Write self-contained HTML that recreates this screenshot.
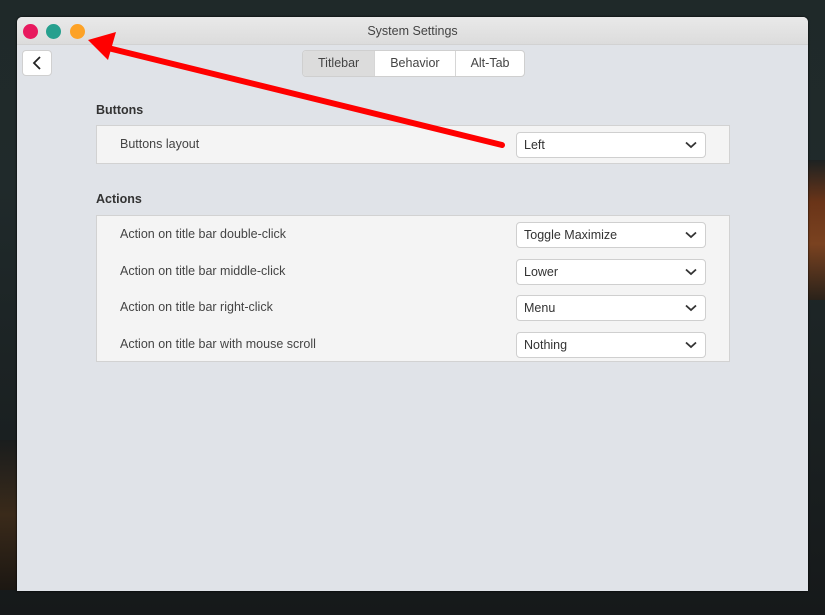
<!DOCTYPE html>
<html><head><style>
*{box-sizing:border-box;margin:0;padding:0}
body{width:825px;height:615px;overflow:hidden;position:relative;font-family:"Liberation Sans","DejaVu Sans",sans-serif;font-size:12.5px;color:#333;
background:linear-gradient(180deg,#1f2929 0%,#202a2b 30%,#16191a 100%);}
.bgr{position:absolute;left:808px;top:160px;width:17px;height:140px;background:linear-gradient(180deg,#1d2222,#6a3418 30%,#7a4220 60%,#2a221a 100%)}
.bgl{position:absolute;left:0;top:440px;width:17px;height:150px;background:linear-gradient(180deg,#1a1d1d,#3a2a1a 50%,#1c1712)}
.win{position:absolute;left:17px;top:17px;width:791px;height:574px;background:#e0e3e8;border-radius:5px 5px 0 0;overflow:hidden;box-shadow:0 0 2px #000}
.tb{height:28px;background:linear-gradient(#e9e9e9,#dcdcdc);text-align:center;line-height:28px;color:#444;font-size:12.5px;border-bottom:1px solid #d2d2d2}
.dot{position:absolute;top:7px;width:15px;height:15px;border-radius:50%}
.back{position:absolute;left:5px;top:33px;width:30px;height:26px;background:#fff;border:1px solid #d0d0d0;border-radius:4px}
.tabs{position:absolute;left:285px;top:33px;height:27px;display:flex;border:1px solid #cfcfcf;border-radius:4px;overflow:hidden;background:#fff}
.tabs div{padding:0 15px;line-height:25px;border-left:1px solid #d6d6d6;color:#444}
.tabs div:first-child{background:#dcdcdc;border-left:none}
h3{position:absolute;left:79px;font-size:12.5px;font-weight:bold;color:#333}
.box{position:absolute;left:79px;width:634px;background:#f4f4f4;border:1px solid #d2d2d2}
.row{height:36.5px;position:relative}
.row span{position:absolute;left:23px;top:11px;color:#444}
.sel{position:absolute;left:419px;top:6px;width:190px;height:26px;background:#fff;border:1px solid #cfcfcf;border-radius:4px;padding-left:7px;line-height:24px;color:#333}
.sel svg{position:absolute;right:8px;top:8px}
</style></head><body>
<div class="bgr"></div><div class="bgl"></div>
<div class="win">
<div class="tb">System Settings</div>
<div class="dot" style="left:6px;background:#e8195e"></div>
<div class="dot" style="left:29px;background:#26a08e"></div>
<div class="dot" style="left:53px;background:#fda226"></div>
<div class="back"><svg width="28" height="24"><path d="M17 6 L11 12 L17 18" fill="none" stroke="#222" stroke-width="1.8"/></svg></div>
<div class="tabs"><div>Titlebar</div><div>Behavior</div><div>Alt-Tab</div></div>
<h3 style="top:86px">Buttons</h3>
<div class="box" style="top:108px;height:39px"><div class="row"><span>Buttons layout</span><div class="sel">Left<svg width="12" height="8"><path d="M1 1.5 L6 6 L11 1.5" fill="none" stroke="#333" stroke-width="1.8"/></svg></div></div></div>
<h3 style="top:175px">Actions</h3>
<div class="box" style="top:198px;height:147px">
<div class="row"><span>Action on title bar double-click</span><div class="sel">Toggle Maximize<svg width="12" height="8"><path d="M1 1.5 L6 6 L11 1.5" fill="none" stroke="#333" stroke-width="1.8"/></svg></div></div>
<div class="row"><span>Action on title bar middle-click</span><div class="sel">Lower<svg width="12" height="8"><path d="M1 1.5 L6 6 L11 1.5" fill="none" stroke="#333" stroke-width="1.8"/></svg></div></div>
<div class="row"><span>Action on title bar right-click</span><div class="sel">Menu<svg width="12" height="8"><path d="M1 1.5 L6 6 L11 1.5" fill="none" stroke="#333" stroke-width="1.8"/></svg></div></div>
<div class="row"><span>Action on title bar with mouse scroll</span><div class="sel">Nothing<svg width="12" height="8"><path d="M1 1.5 L6 6 L11 1.5" fill="none" stroke="#333" stroke-width="1.8"/></svg></div></div>
</div>
</div>
<svg style="position:absolute;left:0;top:0" width="825" height="615">
<line x1="502" y1="145" x2="108" y2="48" stroke="#f00" stroke-width="6" stroke-linecap="round"/>
<polygon points="88,40 116,32 108,60" fill="#f00"/>
</svg>
</body></html>
